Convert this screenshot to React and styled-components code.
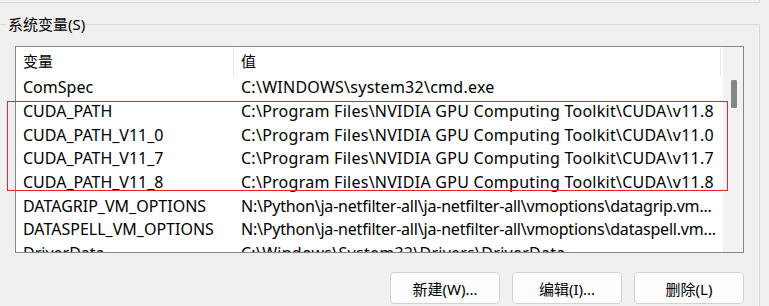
import React from "react";
import styled, { createGlobalStyle } from "styled-components";

const Global = createGlobalStyle`
  html, body { margin: 0; padding: 0; background: #f0f0f0; overflow: hidden; }
  body {
    font-family: "Noto Sans", "Noto Sans CJK SC", sans-serif;
    font-size: 15px;
    color: #000;
  }
  * { box-sizing: border-box; }
`;

const Page = styled.div`
  position: relative;
  width: 769px;
  height: 306px;
  overflow: hidden;
`;

const PrevGroup = styled.div`
  margin-left: -10px;
  width: 770px;
  height: 3px;
  border-right: 1px solid #dadada;
  border-bottom: 1px solid #dadada;
`;

const Group = styled.div`
  position: relative;
  margin-top: 21px;
  margin-left: -10px;
  width: 770px;
  height: 300px;
  border: 1px solid #dadada;
  padding: 21px 15px 0 24px;
`;

const GroupTitle = styled.div`
  position: absolute;
  top: -11px;
  left: 16px;
  padding: 0 1px;
  line-height: 20px;
  background: #f0f0f0;
`;

const List = styled.div`
  position: relative;
  height: 207px;
  border: 1px solid #828790;
  background: #fff;
  display: flex;
  overflow: hidden;
`;

const ListBody = styled.div`
  flex: 1;
  min-width: 0;
  overflow: hidden;
`;

const Header = styled.div`
  display: grid;
  grid-template-columns: 218px 487px;
  height: 29px;
  align-items: center;
`;

const HeaderCell = styled.div`
  height: 100%;
  display: flex;
  align-items: center;
  padding-left: 7px;
  padding-bottom: 2px;
  border-right: 1px solid #e5e5e5;
  border-top: 1px solid #fff;
  border-bottom: 1px solid #fff;
`;

const Row = styled.div`
  display: grid;
  grid-template-columns: 218px 487px;
  height: 23.7px;
  align-items: center;
`;

const Cell = styled.div`
  padding: 0 ${(p) => (p.$value ? 3 : 8)}px 0 7px;
  font-size: 16px;
  letter-spacing: ${(p) => (!p.$value ? 0 : p.$cut ? -0.2 : 0.26)}px;
  white-space: nowrap;
  overflow: hidden;
  line-height: 21px;
`;

const ScrollTrack = styled.div`
  width: 20px;
  flex: none;
  background: #f2f2f2;
  padding-top: 33px;
  display: flex;
  justify-content: center;
`;

const ScrollThumb = styled.div`
  width: 6px;
  height: 28px;
  border-radius: 1px;
  background: #868686;
  margin-left: 1px;
`;

const Highlight = styled.div`
  position: absolute;
  left: 7px;
  top: 101px;
  width: 721px;
  height: 90px;
  border: 1px solid #e3262e;
  pointer-events: none;
`;

const Buttons = styled.div`
  display: flex;
  justify-content: flex-end;
  gap: 12px;
  margin-top: 19px;
`;

const Button = styled.button`
  width: 110px;
  height: 32px;
  border: 1px solid #d3d3d3;
  border-radius: 4px;
  background: #fdfdfd;
  font-family: inherit;
  font-size: 15px;
  color: #000;
  padding: 0;
`;

const rows = [
  ["ComSpec", "C:\\WINDOWS\\system32\\cmd.exe"],
  ["CUDA_PATH", "C:\\Program Files\\NVIDIA GPU Computing Toolkit\\CUDA\\v11.8"],
  ["CUDA_PATH_V11_0", "C:\\Program Files\\NVIDIA GPU Computing Toolkit\\CUDA\\v11.0"],
  ["CUDA_PATH_V11_7", "C:\\Program Files\\NVIDIA GPU Computing Toolkit\\CUDA\\v11.7"],
  ["CUDA_PATH_V11_8", "C:\\Program Files\\NVIDIA GPU Computing Toolkit\\CUDA\\v11.8"],
  ["DATAGRIP_VM_OPTIONS", "N:\\Python\\ja-netfilter-all\\ja-netfilter-all\\vmoptions\\datagrip.vm..."],
  ["DATASPELL_VM_OPTIONS", "N:\\Python\\ja-netfilter-all\\ja-netfilter-all\\vmoptions\\dataspell.vm..."],
  ["DriverData", "C:\\Windows\\System32\\Drivers\\DriverData"],
];

export default function App() {
  return (
    <Page>
      <Global />
      <PrevGroup />
      <Group>
        <GroupTitle>系统变量(S)</GroupTitle>
        <List>
          <ListBody>
            <Header>
              <HeaderCell>变量</HeaderCell>
              <HeaderCell>值</HeaderCell>
            </Header>
            {rows.map(([k, v]) => (
              <Row key={k}>
                <Cell>{k}</Cell>
                <Cell $value $cut={v.endsWith("...")}>{v}</Cell>
              </Row>
            ))}
          </ListBody>
          <ScrollTrack>
            <ScrollThumb />
          </ScrollTrack>
        </List>
        <Buttons>
          <Button>新建(W)...</Button>
          <Button>编辑(I)...</Button>
          <Button>删除(L)</Button>
        </Buttons>
      </Group>
      <Highlight />
    </Page>
  );
}
